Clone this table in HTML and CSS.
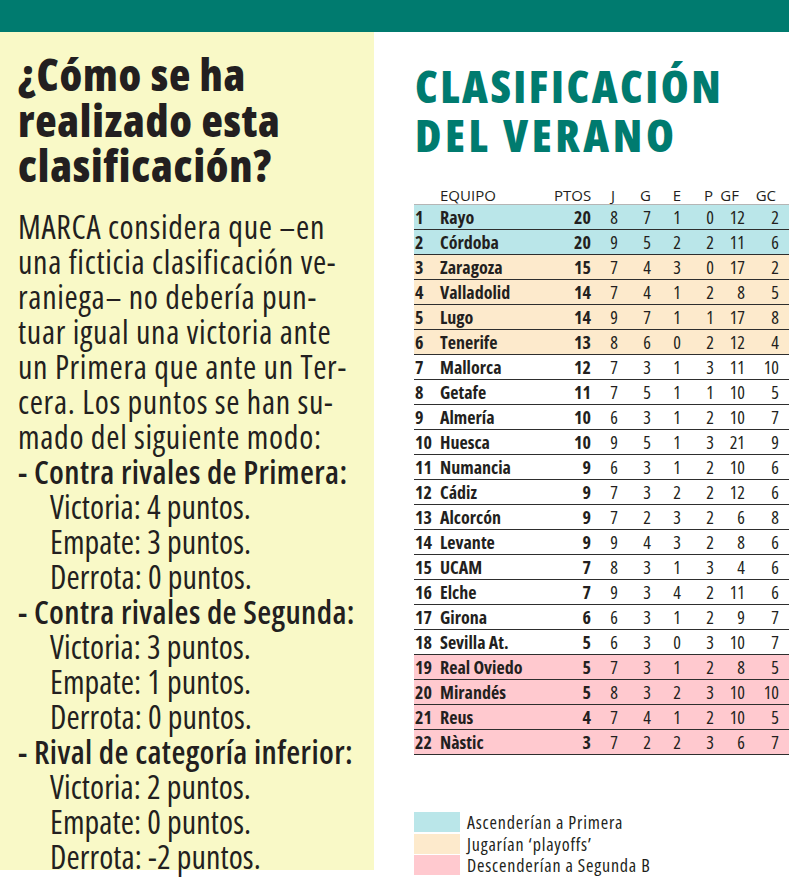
FILE: index.html
```html
<!DOCTYPE html>
<html lang="es">
<head>
<meta charset="utf-8">
<title>Clasificación del verano</title>
<link rel="stylesheet" href="styles.css">
</head>
<body>
<div class="topbar"></div>
<div class="page">
  <section class="info">
    <h2 class="info-title">¿Cómo se ha<br>realizado esta<br>clasificación?</h2>
    <p class="info-text">MARCA considera que –en<br>una ficticia clasificación ve-<br>raniega– no debería pun-<br>tuar igual una victoria ante<br>un Primera que ante un Ter-<br>cera. Los puntos se han su-<br>mado del siguiente modo:</p>
    <ul class="rules">
      <li class="rule-head">- Contra rivales de Primera:</li>
      <li class="rule">Victoria: 4 puntos.</li>
      <li class="rule">Empate: 3 puntos.</li>
      <li class="rule">Derrota: 0 puntos.</li>
      <li class="rule-head">- Contra rivales de Segunda:</li>
      <li class="rule">Victoria: 3 puntos.</li>
      <li class="rule">Empate: 1 puntos.</li>
      <li class="rule">Derrota: 0 puntos.</li>
      <li class="rule-head">- Rival de categoría inferior:</li>
      <li class="rule">Victoria: 2 puntos.</li>
      <li class="rule">Empate: 0 puntos.</li>
      <li class="rule">Derrota: -2 puntos.</li>
    </ul>
  </section>
  <section class="standings">
    <h1 class="title"><span class="title-line">CLASIFICACIÓN</span><br><span class="title-line wide">DEL VERANO</span></h1>
    <table class="table">
      <colgroup>
        <col class="c-rank"><col class="c-team"><col class="c-pts"><col class="c-j"><col class="c-g"><col class="c-e"><col class="c-p"><col class="c-gf"><col class="c-gc">
      </colgroup>
      <thead>
        <tr><th></th><th class="h-team">EQUIPO</th><th>PTOS</th><th class="h-j">J</th><th class="h-g">G</th><th class="h-e">E</th><th class="h-p">P</th><th class="h-gf">GF</th><th class="h-gc">GC</th></tr>
      </thead>
      <tbody>
        <tr class="up"><td class="rank">1</td><td class="team">Rayo</td><td class="pts">20</td><td>8</td><td>7</td><td>1</td><td>0</td><td>12</td><td class="gc">2</td></tr>
        <tr class="up"><td class="rank">2</td><td class="team">Córdoba</td><td class="pts">20</td><td>9</td><td>5</td><td>2</td><td>2</td><td>11</td><td class="gc">6</td></tr>
        <tr class="po"><td class="rank">3</td><td class="team">Zaragoza</td><td class="pts">15</td><td>7</td><td>4</td><td>3</td><td>0</td><td>17</td><td class="gc">2</td></tr>
        <tr class="po"><td class="rank">4</td><td class="team">Valladolid</td><td class="pts">14</td><td>7</td><td>4</td><td>1</td><td>2</td><td>8</td><td class="gc">5</td></tr>
        <tr class="po"><td class="rank">5</td><td class="team">Lugo</td><td class="pts">14</td><td>9</td><td>7</td><td>1</td><td>1</td><td>17</td><td class="gc">8</td></tr>
        <tr class="po"><td class="rank">6</td><td class="team">Tenerife</td><td class="pts">13</td><td>8</td><td>6</td><td>0</td><td>2</td><td>12</td><td class="gc">4</td></tr>
        <tr><td class="rank">7</td><td class="team">Mallorca</td><td class="pts">12</td><td>7</td><td>3</td><td>1</td><td>3</td><td>11</td><td class="gc">10</td></tr>
        <tr><td class="rank">8</td><td class="team">Getafe</td><td class="pts">11</td><td>7</td><td>5</td><td>1</td><td>1</td><td>10</td><td class="gc">5</td></tr>
        <tr><td class="rank">9</td><td class="team">Almería</td><td class="pts">10</td><td>6</td><td>3</td><td>1</td><td>2</td><td>10</td><td class="gc">7</td></tr>
        <tr><td class="rank">10</td><td class="team">Huesca</td><td class="pts">10</td><td>9</td><td>5</td><td>1</td><td>3</td><td>21</td><td class="gc">9</td></tr>
        <tr><td class="rank">11</td><td class="team">Numancia</td><td class="pts">9</td><td>6</td><td>3</td><td>1</td><td>2</td><td>10</td><td class="gc">6</td></tr>
        <tr><td class="rank">12</td><td class="team">Cádiz</td><td class="pts">9</td><td>7</td><td>3</td><td>2</td><td>2</td><td>12</td><td class="gc">6</td></tr>
        <tr><td class="rank">13</td><td class="team">Alcorcón</td><td class="pts">9</td><td>7</td><td>2</td><td>3</td><td>2</td><td>6</td><td class="gc">8</td></tr>
        <tr><td class="rank">14</td><td class="team">Levante</td><td class="pts">9</td><td>9</td><td>4</td><td>3</td><td>2</td><td>8</td><td class="gc">6</td></tr>
        <tr><td class="rank">15</td><td class="team">UCAM</td><td class="pts">7</td><td>8</td><td>3</td><td>1</td><td>3</td><td>4</td><td class="gc">6</td></tr>
        <tr><td class="rank">16</td><td class="team">Elche</td><td class="pts">7</td><td>9</td><td>3</td><td>4</td><td>2</td><td>11</td><td class="gc">6</td></tr>
        <tr><td class="rank">17</td><td class="team">Girona</td><td class="pts">6</td><td>6</td><td>3</td><td>1</td><td>2</td><td>9</td><td class="gc">7</td></tr>
        <tr><td class="rank">18</td><td class="team">Sevilla At.</td><td class="pts">5</td><td>6</td><td>3</td><td>0</td><td>3</td><td>10</td><td class="gc">7</td></tr>
        <tr class="down"><td class="rank">19</td><td class="team">Real Oviedo</td><td class="pts">5</td><td>7</td><td>3</td><td>1</td><td>2</td><td>8</td><td class="gc">5</td></tr>
        <tr class="down"><td class="rank">20</td><td class="team">Mirandés</td><td class="pts">5</td><td>8</td><td>3</td><td>2</td><td>3</td><td>10</td><td class="gc">10</td></tr>
        <tr class="down"><td class="rank">21</td><td class="team">Reus</td><td class="pts">4</td><td>7</td><td>4</td><td>1</td><td>2</td><td>10</td><td class="gc">5</td></tr>
        <tr class="down"><td class="rank">22</td><td class="team">Nàstic</td><td class="pts">3</td><td>7</td><td>2</td><td>2</td><td>3</td><td>6</td><td class="gc">7</td></tr>
      </tbody>
    </table>
    <ul class="legend">
      <li class="legend-item"><span class="swatch sw-up"></span>Ascenderían a Primera</li>
      <li class="legend-item"><span class="swatch sw-po"></span>Jugarían ‘playoffs’</li>
      <li class="legend-item"><span class="swatch sw-down"></span>Descenderían a Segunda B</li>
    </ul>
  </section>
</div>
</body>
</html>
```
FILE: styles.css
```css
* { box-sizing: border-box; }
html, body { margin: 0; padding: 0; background: #ffffff; }
body {
  width: 796px;
  height: 881px;
  overflow: hidden;
  font-family: "Open Sans", "DejaVu Sans Condensed", sans-serif;
  font-stretch: 75%;
  color: #231f20;
}
.topbar {
  width: 789px;
  height: 32px;
  background: #007b6f;
}
.page {
  display: grid;
  grid-template-columns: 374px 415px;
  align-items: start;
}
.info {
  background: #f9f9c7;
  height: 838px;
  padding: 20px 0 0 18px;
}
.info-title {
  margin: 0;
  font-size: 44px;
  line-height: 45.5px;
  font-weight: 800;
  letter-spacing: 0.8px;
  white-space: nowrap;
}
.info-text {
  margin: 20px 0 0;
  font-size: 32px;
  line-height: 35px;
  font-weight: 400;
  letter-spacing: 0.7px;
  white-space: nowrap;
}
.rules {
  list-style: none;
  margin: 0;
  padding: 0;
  font-size: 32px;
  line-height: 35px;
  white-space: nowrap;
}
.rule-head { font-weight: 600; letter-spacing: 0.4px; }
.rule { padding-left: 32px; letter-spacing: 0.1px; }

.standings {
  padding: 29px 0 0 40px;
  display: flex;
  flex-direction: column;
}
.title {
  margin: 0;
  color: #007b6f;
  font-size: 45px;
  line-height: 49px;
  font-weight: 800;
  letter-spacing: 2.5px;
  white-space: nowrap;
  padding-left: 1px;
}
.title-line.wide { letter-spacing: 3.6px; }
.table {
  margin-top: 27px;
  width: 375px;
  table-layout: fixed;
  border-collapse: collapse;
  font-size: 18px;
  line-height: 24px;
}
.c-rank { width: 26px; }
.c-team { width: 114px; }
.c-pts { width: 37px; }
.c-j { width: 27px; }
.c-g { width: 33px; }
.c-e { width: 30px; }
.c-p { width: 33px; }
.c-gf { width: 31px; }
.c-gc { width: 44px; }
.table th {
  font-size: 15px;
  line-height: 18px;
  font-weight: 400;
  font-stretch: 100%;
  text-align: right;
  padding: 0;
  border-bottom: 1px solid #b5b5b5;
  white-space: nowrap;
}
.table th.h-team { text-align: left; }
.table th.h-j { padding-right: 3px; }
.table th.h-p { padding-right: 1px; }
.table th.h-gf { padding-right: 6px; }
.table th.h-gc { padding-right: 13px; }
.table td {
  padding: 0;
  height: 25px;
  text-align: right;
  border-bottom: 1px solid #2e2e2e;
  white-space: nowrap;
}
.table td.rank { text-align: left; font-weight: 700; padding-left: 1px; }
.table td.team { text-align: left; font-weight: 700; }
.table td.pts { font-weight: 700; }
.table td.gc { padding-right: 10px; }
.table tr.up td { background: #bae6e9; }
.table tr.po td { background: #fdeacc; }
.table tr.down td { background: #ffc9cf; }

.legend {
  list-style: none;
  margin: 57px 0 0;
  padding: 0;
  display: flex;
  flex-direction: column;
  gap: 1.5px;
}
.legend-item {
  display: flex;
  align-items: center;
  gap: 7px;
  height: 20px;
  font-size: 18px;
  line-height: 20px;
  letter-spacing: 0.8px;
}
.swatch { width: 46px; height: 20px; flex: none; }
.sw-up { background: #bae6e9; }
.sw-po { background: #fdeacc; }
.sw-down { background: #ffc9cf; }
```
